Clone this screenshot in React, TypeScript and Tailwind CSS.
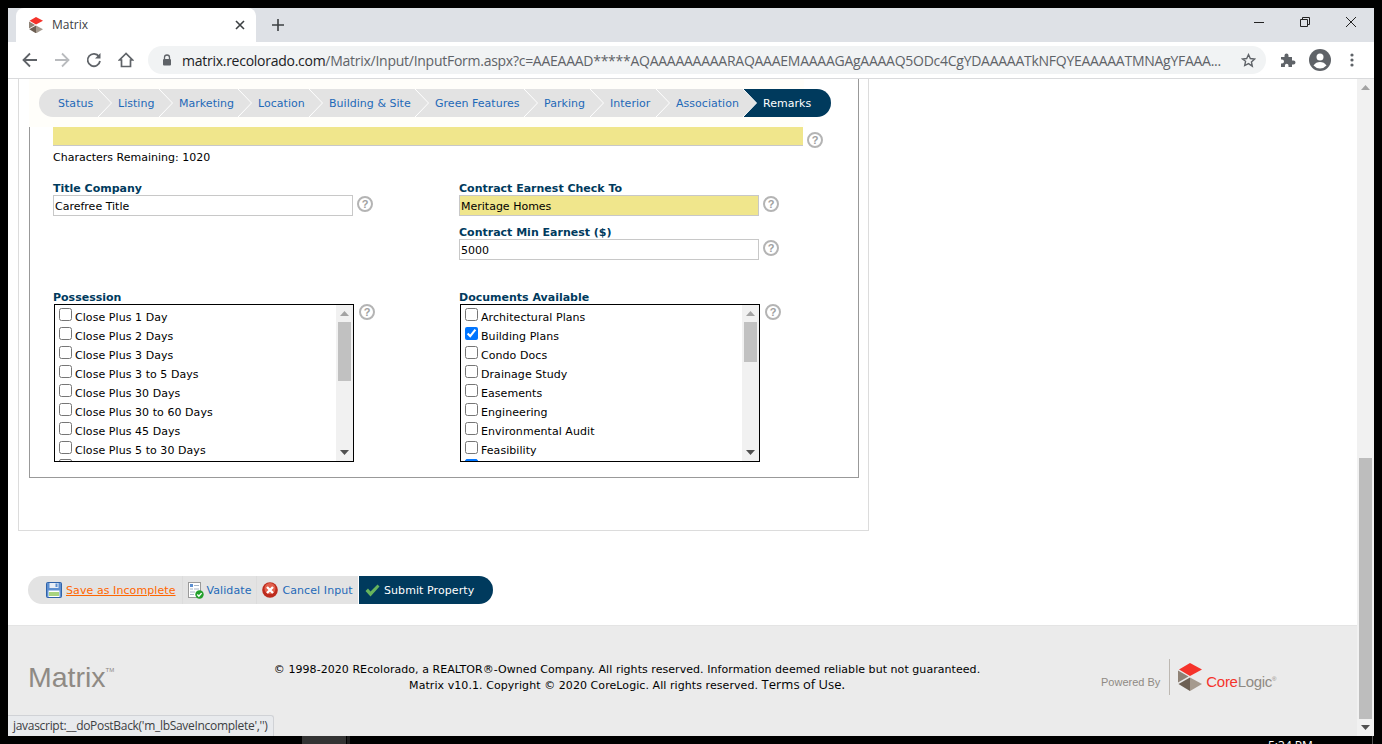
import React from "react";

const verdana = "font-['DejaVu_Sans',Verdana,sans-serif]";

function Help() {
  return (
    <span className="flex h-4 w-4 shrink-0 items-center justify-center rounded-full border-2 border-[#b4b4b4] font-['Liberation_Sans',sans-serif] text-[11px] font-bold leading-none text-[#a0a0a0]">
      ?
    </span>
  );
}

function Arrow({ up }: { up?: boolean }) {
  return (
    <svg width="9" height="5" viewBox="0 0 9 5" className="block">
      <path d={up ? "M0 5 4.5 0 9 5Z" : "M0 0 4.5 5 9 0Z"} fill={up ? "#a3a3a3" : "#505050"} />
    </svg>
  );
}

function ListBox({ items, checked, thumb, lastChecked }: { items: string[]; checked?: string; thumb: string; lastChecked?: boolean }) {
  return (
    <div className="flex h-[158px] w-[300px] overflow-hidden border border-black bg-white">
      <div className="flex-1 overflow-hidden pl-[4px] pt-[2px]">
        {items.map((t) => (
          <label key={t} className="flex h-[19px] items-start">
            <input type="checkbox" readOnly checked={t === checked} className="mt-[1px] h-[13px] w-[13px] accent-[#0075ff]" />
            <span className="ml-[3px] mt-[3px] text-[11px] leading-[16px] tracking-[0.06px] text-black">{t}</span>
          </label>
        ))}
        <div className="h-[13px] w-[13px] rounded-[2px] border border-[#767676] data-[c=1]:border-[#0075ff] data-[c=1]:bg-[#0075ff]" data-c={lastChecked ? "1" : "0"} />
      </div>
      <div className="flex w-[17px] flex-col items-center bg-[#f1f1f1]">
        <div className="flex h-[17px] items-center justify-center"><Arrow up /></div>
        <div className={`w-[13px] bg-[#c1c1c1] ${thumb}`} />
        <div className="flex-1" />
        <div className="flex h-[17px] items-center justify-center"><Arrow /></div>
      </div>
    </div>
  );
}

function Field({ label, value, yellow }: { label: string; value: string; yellow?: boolean }) {
  return (
    <div>
      <div className="h-[13px] text-[11px] font-bold leading-[13px] text-[#003a5d]">{label}</div>
      <div className="flex items-start">
        <div className={`flex h-[21px] w-[300px] items-center border border-[#c8c8c8] pl-[1px] pt-[2px] text-[11px] leading-[14px] text-black ${yellow ? "bg-[#f0e68c]" : "bg-white"}`}>{value}</div>
        <span className="ml-[4px] mt-[1px]"><Help /></span>
      </div>
    </div>
  );
}

const tabs: [string, string][] = [
  ["Status", "w-[60px] rounded-l-full"],
  ["Listing", "w-[61px]"],
  ["Marketing", "w-[79px]"],
  ["Location", "w-[71px]"],
  ["Building & Site", "w-[106px]"],
  ["Green Features", "w-[109px]"],
  ["Parking", "w-[66px]"],
  ["Interior", "w-[66px]"],
  ["Association", "w-[87px]"],
];

function Chevron() {
  return (
    <svg width="14" height="28" viewBox="0 0 14 28" className="absolute -right-[13px] top-0 z-10">
      <path d="M0 0 13.5 14 0 28" fill="#e3e3e3" />
      <path d="M0 0 13.5 14 0 28" fill="none" stroke="#fff" strokeWidth="1" />
    </svg>
  );
}

function TabBar() {
  return (
    <div className="flex h-[28px] w-[792px] tracking-[0.03px]">
      {tabs.map(([t, c]) => (
        <div key={t} className={`relative flex items-center whitespace-nowrap bg-[#e3e3e3] pl-[19px] pt-[2px] text-[11px] text-[#1e69b8] ${c}`}>
          {t}
          <Chevron />
        </div>
      ))}
      <div className="flex flex-1 items-center rounded-r-full bg-[#003a5d] pl-[19px] pt-[2px] text-[11px] text-white">Remarks</div>
    </div>
  );
}

const poss = ["Close Plus 1 Day", "Close Plus 2 Days", "Close Plus 3 Days", "Close Plus 3 to 5 Days", "Close Plus 30 Days", "Close Plus 30 to 60 Days", "Close Plus 45 Days", "Close Plus 5 to 30 Days"];
const docs = ["Architectural Plans", "Building Plans", "Condo Docs", "Drainage Study", "Easements", "Engineering", "Environmental Audit", "Feasibility"];

function SaveIcon() {
  return (
    <svg width="16" height="16" viewBox="0 0 16 16">
      <rect x="0.5" y="0.5" width="15" height="15" rx="1" fill="#5d8fd0" stroke="#2f62a8" />
      <rect x="3.5" y="1" width="9" height="5" fill="#e8eef6" />
      <rect x="9.5" y="1.5" width="2" height="3.5" fill="#5d8fd0" />
      <rect x="2.5" y="8.5" width="11" height="6.5" fill="#fff" />
      <rect x="3" y="10" width="10" height="4" fill="#a8d37f" />
    </svg>
  );
}
function ValidateIcon() {
  return (
    <svg width="16" height="17" viewBox="0 0 16 17">
      <rect x="0.5" y="0.5" width="12" height="15" fill="#fff" stroke="#9a9a9a" />
      <rect x="2" y="2" width="3" height="3" fill="#5d8fd0" />
      <path d="M6 3.5h5M6 7h5M2 7h3M2 10h5M2 12.5h4" stroke="#a5b4c6" />
      <circle cx="11.5" cy="12.5" r="4.2" fill="#23a02b" />
      <path d="m9.3 12.5 1.6 1.7 2.7-3.1" stroke="#fff" strokeWidth="1.4" fill="none" />
    </svg>
  );
}
function CancelIcon() {
  return (
    <svg width="16" height="16" viewBox="0 0 16 16">
      <circle cx="8" cy="8" r="7.8" fill="#bd2b1d" />
      <circle cx="8" cy="6.5" r="5.5" fill="#e2604c" />
      <path d="m5 5 6 6M11 5l-6 6" stroke="#fff" strokeWidth="2.4" />
    </svg>
  );
}
function CheckIcon() {
  return (
    <svg width="15" height="13" viewBox="0 0 15 13">
      <path d="M0.5 7 3 4.5 5.5 7.5 12.500 0.500 14.500 2.500 5.500 12.500Z" fill="#67b45c" />
    </svg>
  );
}

function CubeLogo({ size }: { size: number }) {
  return (
    <svg width={size} height={size * 1.17} viewBox="0 0 24 28">
      <path d="M12 0 24 6.500 12 13 1 6.500Z" fill="#f5332b" />
      <path d="M0 7.500 10.500 13.500 0 19.500Z" fill="#8e8276" />
      <path d="M0.500 21 12 14.500 12 28Z" fill="#6c5f53" />
      <path d="M12 14.500 24 21 12 28Z" fill="#a59a8e" />
    </svg>
  );
}

function TabStrip() {
  return (
    <div className="flex h-[34px] shrink-0 items-end bg-[#dee1e6] pl-[8px]">
      <div className="flex h-[34px] w-[240px] items-center rounded-t-[8px] bg-white pl-[13px] font-['Open_Sans',sans-serif] text-[12px] text-[#3c4043]">
        <CubeLogo size={14} />
        <span className="ml-[9px] flex-1">Matrix</span>
        <svg width="10" height="10" viewBox="0 0 10 10" className="mr-[11px]"><path d="m1 1 8 8M9 1 1 9" stroke="#3c4043" strokeWidth="1.6" /></svg>
      </div>
      <div className="ml-[16px] flex h-[34px] w-[12px] items-center">
        <svg width="12" height="12" viewBox="0 0 12 12"><path d="M6 0v12M0 6h12" stroke="#3c4043" strokeWidth="1.6" /></svg>
      </div>
      <div className="flex-1" />
      <div className="flex h-[28px] items-center self-start">
        <svg width="10" height="1" viewBox="0 0 10 1" className="mr-[36px]"><path d="M0 .5h10" stroke="#222" /></svg>
        <svg width="10" height="10" viewBox="0 0 10 10" className="mr-[36px]"><path d="M.5 2.500h7v7h-7zM2.500 2.500v-2h7v7h-2" fill="none" stroke="#222" /></svg>
        <svg width="10" height="10" viewBox="0 0 10 10" className="mr-[18px]"><path d="m0 0 10 10M10 0 0 10" stroke="#222" strokeWidth="1" /></svg>
      </div>
    </div>
  );
}

function Toolbar() {
  return (
    <div className="flex h-[37px] shrink-0 items-center border-b border-[#d9dadc] bg-white pl-[14px]">
      <svg width="16" height="16" viewBox="0 0 16 16" className="mr-[16px]"><path d="M15 8H2M8 1.500 1.500 8 8 14.500" fill="none" stroke="#5f6368" strokeWidth="1.800" /></svg>
      <svg width="16" height="16" viewBox="0 0 16 16" className="mr-[16px]"><path d="M1 8h13M8 1.500 14.500 8 8 14.500" fill="none" stroke="#b9bbbe" strokeWidth="1.800" /></svg>
      <svg width="16" height="16" viewBox="0 0 16 16" className="mr-[16px]"><path d="M13 4.500A6.200 6.200 0 1 0 14 9" fill="none" stroke="#5f6368" strokeWidth="1.800" /><path d="M14.500 1v5.500H9Z" fill="#5f6368" /></svg>
      <svg width="16" height="16" viewBox="0 0 16 16" className="mr-[14px]"><path d="M8 1.500 1.500 8H3.500V14.500H12.500V8H14.500Z" fill="none" stroke="#5f6368" strokeWidth="1.700" strokeLinejoin="miter" /></svg>
      <div className="flex h-[28px] w-[1118px] items-center rounded-full bg-[#f1f3f4] pl-[14px]">
        <svg width="10" height="12" viewBox="0 0 10 12" className="mr-[10px] shrink-0"><path d="M2.500 5V3.500a2.500 2.500 0 0 1 5 0V5" fill="none" stroke="#5f6368" strokeWidth="1.300" /><rect x="1" y="5" width="8" height="6.500" rx="1" fill="#5f6368" /></svg>
        <div className="w-[1041px] shrink-0 overflow-hidden whitespace-nowrap font-['Open_Sans',sans-serif] text-[14px] tracking-[-0.265px] text-[#5f6368]">
          <span className="text-[#202124]">matrix.recolorado.com</span>/Matrix/Input/InputForm.aspx?c=AAEAAAD*****AQAAAAAAAAARAQAAAEMAAAAGAgAAAAQ5ODc4CgYDAAAAATkNFQYEAAAAATMNAgYFAAA...
        </div>
        <svg width="15" height="15" viewBox="0 0 24 24" className="ml-[18px]"><path d="m12 2.500 2.900 6.300 6.900.8-5.100 4.700 1.400 6.800L12 17l-6.100 3.100 1.400-6.800L2.200 9.600l6.900-.8Z" fill="none" stroke="#5f6368" strokeWidth="2.200" /></svg>
      </div>
      <svg width="16" height="16" viewBox="0 0 16 16" className="ml-[14px]"><path d="M1 5h3.500V3.500a2 2 0 0 1 4 0V5H12v3.500h1.500a2 2 0 0 1 0 4H12V15H8.500v-1.500a1.800 1.800 0 0 0-3.600 0V15H1v-3.500h1a2 2 0 0 0 0-4H1Z" fill="#5f6368" /></svg>
      <svg width="22" height="22" viewBox="0 0 22 22" className="ml-[13px]"><circle cx="11" cy="11" r="11" fill="#5f6368" /><circle cx="11" cy="8" r="3.500" fill="#fff" /><path d="M4.500 16.500c1.500-2.500 4-3.500 6.500-3.500s5 1 6.500 3.500A9 9 0 0 1 11 19.500a9 9 0 0 1-6.500-3Z" fill="#fff" /></svg>
      <svg width="4" height="14" viewBox="0 0 4 14" className="ml-[19px]"><circle cx="2" cy="2" r="1.600" fill="#5f6368" /><circle cx="2" cy="7" r="1.600" fill="#5f6368" /><circle cx="2" cy="12" r="1.600" fill="#5f6368" /></svg>
    </div>
  );
}

function PageScrollbar() {
  return (
    <div className="flex w-[17px] shrink-0 flex-col items-center bg-[#f1f1f1]">
      <div className="flex h-[18px] items-center justify-center"><Arrow up /></div>
      <div className="h-[362px]" />
      <div className="h-[261px] w-[13px] bg-[#bdbdbd]" />
      <div className="flex-1" />
      <div className="flex h-[17px] items-center justify-center"><Arrow /></div>
    </div>
  );
}

function Form() {
  return (
    <div className="ml-[10px] h-[452px] w-[851px] border-x border-b border-[#dcdcdc]">
      <div className="relative ml-[10px] h-[399px] w-[830px] border-x border-b border-[#999]">
        <div className="absolute -left-[1px] top-0 h-[48px] w-[775px] bg-[#fffefa]" />
        <div className="absolute left-[9px] top-[10px] z-10"><TabBar /></div>
        <div className="relative pl-[23px] pt-[48px]">
          <div className="flex items-start">
            <div className="h-[19px] w-[750px] border-b border-[#c8c8c8] bg-[#f0e68c]" />
            <span className="ml-[4px] mt-[5px]"><Help /></span>
          </div>
          <div className="mt-[2px] h-[16px] text-[11px] leading-[16px] text-black">Characters Remaining: 1020</div>
          <div className="mt-[16px] flex">
            <div className="w-[406px]">
              <Field label="Title Company" value="Carefree Title" />
            </div>
            <div>
              <Field label="Contract Earnest Check To" value="Meritage Homes" yellow />
              <div className="mt-[10px]"><Field label="Contract Min Earnest ($)" value="5000" /></div>
            </div>
          </div>
          <div className="mt-[31px] flex">
            <div className="w-[406px]">
              <div className="h-[13px] text-[11px] font-bold leading-[13px] text-[#003a5d]">Possession</div>
              <div className="flex items-start pl-[1px]">
                <ListBox items={poss} thumb="h-[59px]" />
                <span className="ml-[5px]"><Help /></span>
              </div>
            </div>
            <div>
              <div className="h-[13px] text-[11px] font-bold leading-[13px] text-[#003a5d]">Documents Available</div>
              <div className="flex items-start pl-[1px]">
                <ListBox items={docs} checked="Building Plans" thumb="h-[40px]" lastChecked />
                <span className="ml-[5px]"><Help /></span>
              </div>
            </div>
          </div>
        </div>
      </div>
    </div>
  );
}

function ActionBar() {
  return (
    <div className="ml-[20px] mt-[45px] flex h-[28px] w-[465px] text-[11px] tracking-[0.08px]">
      <div className="flex w-[330px] items-center rounded-l-full bg-[#e3e3e3] pl-[18px]">
        <SaveIcon />
        <span className="ml-[4px] pt-[2px] text-[#ff6600] underline">Save as Incomplete</span>
        <span className="ml-[6px] h-full w-px bg-[#dcdcdc]" />
        <span className="ml-[5px]"><ValidateIcon /></span>
        <span className="ml-[3px] pt-[2px] text-[#1e69b8]">Validate</span>
        <span className="ml-[5px] h-full w-px bg-[#dcdcdc]" />
        <span className="ml-[5px]"><CancelIcon /></span>
        <span className="ml-[4px] pt-[2px] text-[#1e69b8]">Cancel Input</span>
      </div>
      <div className="flex flex-1 items-center rounded-r-full border-l border-white bg-[#003a5d] pl-[6px] text-white">
        <CheckIcon />
        <span className="ml-[4px] pt-[2px]">Submit Property</span>
      </div>
    </div>
  );
}

function Footer() {
  return (
    <div className="relative mt-[21px] flex h-[111px] items-start border-t border-[#e4e4e4] bg-[#ebebeb]">
      <div className="ml-[20px] mt-[33px] flex w-[219px] items-start font-['Liberation_Sans',sans-serif] text-[28.5px] leading-[36px] text-[#8f8a84]">
        Matrix<span className="mt-[7px] text-[6px] leading-[8px]">TM</span>
      </div>
      <div className="mt-[36px] w-[760px] text-center text-[11px] leading-[15px] text-black">
        <div className="tracking-[0.055px]">© 1998-2020 REcolorado, a REALTOR®-Owned Company. All rights reserved. Information deemed reliable but not guaranteed.</div>
        <div className="tracking-[0.07px]">Matrix v10.1. Copyright © 2020 CoreLogic. All rights reserved. <span className="font-['Open_Sans',sans-serif] text-[13px] tracking-normal">Terms of Use.</span></div>
      </div>
      <div className="ml-[94px] mt-[33px] flex h-[36px] items-center font-['Liberation_Sans',sans-serif]">
        <span className="mt-[10px] text-[11px] text-[#8f8a84]">Powered By</span>
        <span className="ml-[9px] mr-[8px] h-[36px] w-px bg-[#bdb8b2]" />
        <CubeLogo size={24} />
        <span className="ml-[4px] mt-[10px] text-[15px] font-medium tracking-[-0.3px] text-[#f5332b]">Core<span className="text-[#8f8a84]">Logic</span><span className="align-super text-[6px] text-[#8f8a84]">®</span></span>
      </div>
      <div className="absolute bottom-0 left-0 z-10 flex h-[21px] w-[266px] items-center rounded-tr-[3px] border-r border-t border-[#d0d2d6] bg-[#e8eaed] pl-[5px] font-['Open_Sans',sans-serif] text-[12px] tracking-[-0.3px] text-[#3c4043]">
        javascript:__doPostBack('m_lbSaveIncomplete','')
      </div>
    </div>
  );
}

function BottomEdge() {
  return (
    <div className="flex h-[8px] overflow-hidden">
      <div className="ml-[302px] h-[8px] w-[44px] bg-[#333]" />
      <div className="ml-[1px] h-[8px] w-[3px] bg-[#1c1c1c]" />
      <div className="ml-[918px] mt-[3px] font-['Open_Sans',sans-serif] text-[12px] leading-[14px] text-white">5:34 PM</div>
      <div className="ml-[59px] h-[8px] w-px bg-[#555]" />
    </div>
  );
}

export default function App() {
  return (
    <div className={`flex h-[744px] w-[1382px] flex-col overflow-hidden bg-black ${verdana}`}>
      <div className="h-[8px] shrink-0" />
      <div className="mx-[8px] flex h-[728px] shrink-0 flex-col">
        <TabStrip />
        <Toolbar />
        <div className="flex min-h-0 flex-1 bg-white">
          <div className="min-w-0 flex-1">
            <Form />
            <ActionBar />
            <Footer />
          </div>
          <PageScrollbar />
        </div>
      </div>
      <BottomEdge />
    </div>
  );
}
